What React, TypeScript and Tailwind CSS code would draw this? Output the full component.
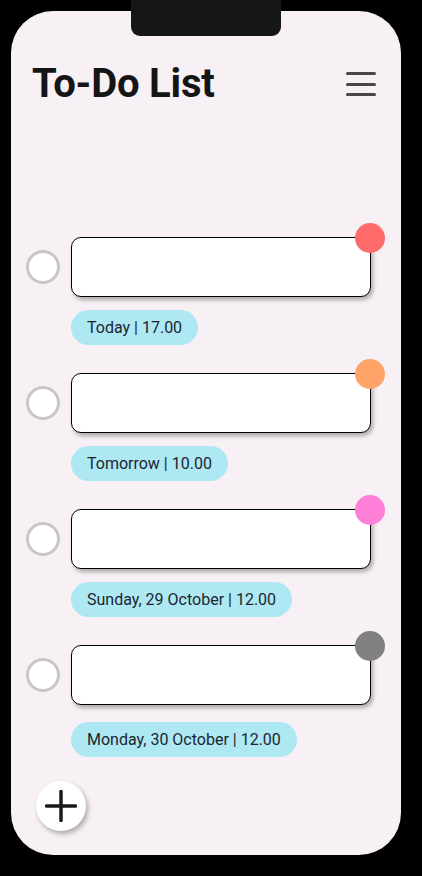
import React from 'react';

type Task = {
  label: string;
  dot: string;
};

const TASKS: Task[] = [
  { label: 'Today | 17.00', dot: 'bg-[#ff6b6b]' },
  { label: 'Tomorrow | 10.00', dot: 'bg-[#ffa468]' },
  { label: 'Sunday, 29 October | 12.00', dot: 'bg-[#ff80d8]' },
  { label: 'Monday, 30 October | 12.00', dot: 'bg-[#808080]' },
];

function TaskItem({ task, last }: { task: Task; last: boolean }) {
  return (
    <div className={last ? '' : 'mb-[28px]'}>
      <div className="flex items-center">
        <div className="ml-[15px] w-[34px] h-[34px] rounded-full border-[3px] border-[#c9c6c8] bg-white shrink-0" />
        <div className="relative ml-[11px] w-[300px] h-[60px] rounded-[10px] border border-black bg-white shadow-[2px_3px_4px_rgba(0,0,0,0.3)]">
          <div className={`absolute -top-[15px] -right-[15px] w-[30px] h-[30px] rounded-full ${task.dot}`} />
        </div>
      </div>
      <div className={`${last ? 'mt-[17px]' : 'mt-[13px]'} ml-[60px] inline-flex items-center h-[35px] px-[16px] rounded-full bg-[#ade8f3] text-[16px] text-[#1c2630]`}>
        {task.label}
      </div>
    </div>
  );
}

export default function App() {
  return (
    <div className="w-[422px] h-[876px] bg-black relative overflow-hidden" style={{ fontFamily: 'Roboto, "Noto Sans", sans-serif' }}>
      <div className="absolute left-[11px] top-[11px] w-[390px] h-[844px] rounded-[42px] bg-[#f7f0f4] overflow-hidden">
        <div className="flex items-center justify-between pl-[21px] pr-[25px] pt-[53px]">
          <h1 className="text-[40px] leading-[40px] font-bold text-[#151515] tracking-[-0.2px]">To-Do List</h1>
          <div className="flex flex-col gap-[7.5px] w-[30px]">
            <div className="h-[3px] rounded-full bg-[#4a4548]" />
            <div className="h-[3px] rounded-full bg-[#4a4548]" />
            <div className="h-[3px] rounded-full bg-[#4a4548]" />
          </div>
        </div>

        <div className="mt-[133px]">
          {TASKS.map((t, i) => (
            <TaskItem key={i} task={t} last={i === TASKS.length - 1} />
          ))}
        </div>

        <button className="absolute left-[25px] bottom-[24px] w-[50px] h-[50px] rounded-full bg-white shadow-[2px_3px_5px_rgba(0,0,0,0.3)] flex items-center justify-center">
          <svg width="32" height="32" viewBox="0 0 32 32">
            <path d="M16 1.5v29M1.5 16h29" stroke="#1a1a1a" strokeWidth="3.5" strokeLinecap="round" />
          </svg>
        </button>
      </div>
      {/* notch */}
      <div className="absolute left-[131px] top-0 w-[150px] h-[36px] rounded-b-[9px] bg-[#161616]" />
    </div>
  );
}
